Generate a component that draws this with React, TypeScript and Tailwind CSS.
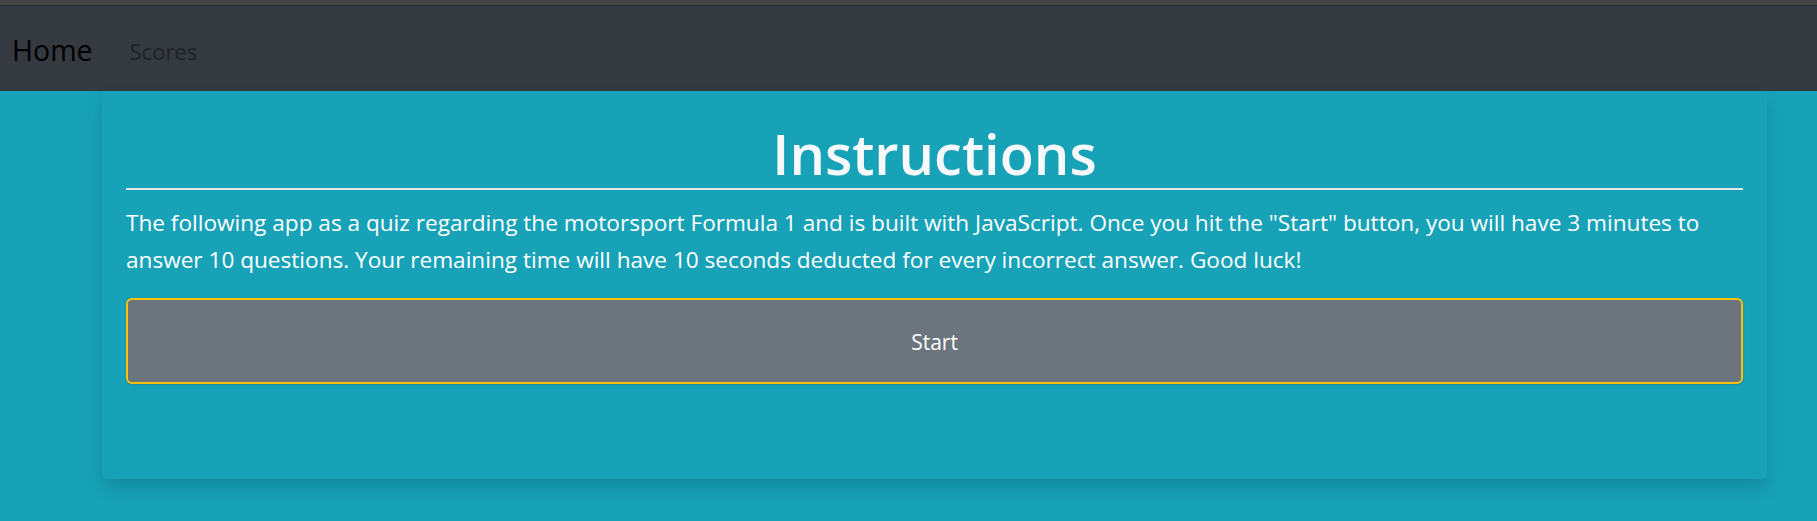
export default function App() {
  return (
    <div className="min-h-[521px] bg-[#17a2b8] font-['Open_Sans',sans-serif]">
      <div className="h-[6px] bg-[#454545] border-b border-[#2b2b2b]" />
      <nav className="h-[85px] bg-[#343a40] flex items-center pl-3 pt-1">
        <a className="text-[28.5px] text-black leading-none">Home</a>
        <a className="ml-[37px] text-[22px] text-[#1e2226] leading-none">Scores</a>
      </nav>
      <main className="pb-10">
        <div className="ml-[102px] w-[1665px] h-[388px] bg-[#18a2b8] rounded-b-md shadow-[0_10px_18px_rgba(0,0,0,0.14)] px-6 pt-[27px]">
          <h1 className="text-center text-[56px] font-semibold text-[#f8f9fa] leading-[70px]">Instructions</h1>
          <hr className="border-0 h-[2px] bg-[#e2e6ea]" />
          <p className="mt-[14px] text-[22.6px] leading-[37px] text-white">
            The following app as a quiz regarding the motorsport Formula 1 and is built with JavaScript. Once you hit the "Start" button, you will have 3 minutes to answer 10 questions. Your remaining time will have 10 seconds deducted for every incorrect answer. Good luck!
          </p>
          <button className="mt-[20px] w-full h-[86px] bg-[#6c757d] border-2 border-[#ffc107] rounded-md pt-1 text-[21px] text-white shadow-sm">
            Start
          </button>
        </div>
      </main>
    </div>
  );
}
